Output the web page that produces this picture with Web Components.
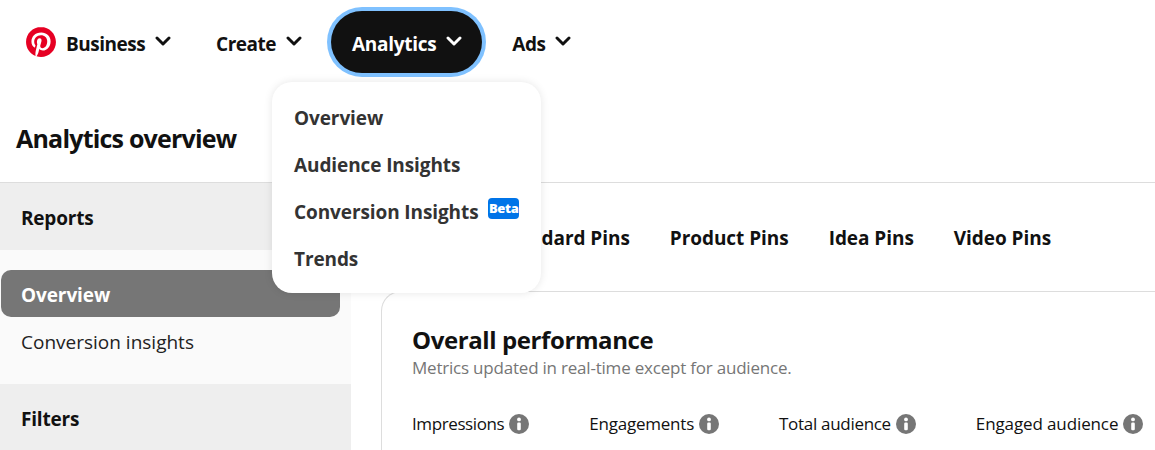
<!DOCTYPE html>
<html>
<head>
<meta charset="utf-8">
<title>Analytics overview</title>
<style>
  html, body { margin: 0; height: 450px; overflow: hidden; background: #fff; }
  body { font-family: "Open Sans", "Noto Sans", sans-serif; color: #111; }
</style>
</head>
<body>
<pin-page></pin-page>

<template id="nav-item-tpl">
  <style>
    :host { display: inline-flex; align-items: center; height: 62px; box-sizing: border-box; font-size: 19px; font-weight: 700; letter-spacing: -.5px; color: #111; gap: 10px; }
    :host([active]) { background: #111; color: #fff; border-radius: 31px; box-shadow: 0 0 0 4px #7fc1ff; padding: 0 20px 0 21px; letter-spacing: -.3px; }
    .label { padding-top: 3px; }
    svg { width: 16px; height: 16px; fill: none; stroke: currentColor; stroke-width: 4.4; stroke-linecap: round; stroke-linejoin: round; margin-top: -2px; }
  </style>
  <span class="label"><slot></slot></span>
  <svg viewBox="0 0 24 24"><path d="M3 7.5l9 9 9-9"/></svg>
</template>

<template id="top-nav-tpl">
  <style>
    :host { display: flex; align-items: center; height: 88px; box-sizing: border-box; padding: 0 0 4px 26px; }
    svg { width: 30px; height: 30px; fill: #e60023; margin-right: 10px; flex: none; }
    .items { display: flex; align-items: center; }
    ::slotted(nav-item:nth-child(1)) { margin-right: 45px; }
    ::slotted(nav-item:nth-child(2)) { margin-right: 29px; }
    ::slotted(nav-item:nth-child(3)) { margin-right: 30px; }
  </style>
  <svg viewBox="0 0 24 24"><path d="M12.017 0C5.396 0 .029 5.367.029 11.987c0 5.079 3.158 9.417 7.618 11.162-.105-.949-.199-2.403.041-3.439.219-.937 1.406-5.957 1.406-5.957s-.359-.72-.359-1.781c0-1.663.967-2.911 2.168-2.911 1.024 0 1.518.769 1.518 1.688 0 1.029-.653 2.567-.992 3.992-.285 1.193.6 2.165 1.775 2.165 2.128 0 3.768-2.245 3.768-5.487 0-2.861-2.063-4.869-5.008-4.869-3.41 0-5.409 2.562-5.409 5.199 0 1.033.394 2.143.889 2.741.099.12.112.225.085.345-.09.375-.293 1.199-.334 1.363-.053.225-.172.271-.401.165-1.495-.69-2.433-2.878-2.433-4.646 0-3.776 2.748-7.252 7.92-7.252 4.158 0 7.392 2.967 7.392 6.923 0 4.135-2.607 7.462-6.233 7.462-1.214 0-2.354-.629-2.758-1.379l-.749 2.848c-.269 1.045-1.004 2.352-1.498 3.146 1.123.345 2.306.535 3.55.535 6.607 0 11.985-5.365 11.985-11.987C23.97 5.39 18.592.026 11.985.026L12.017 0z"/></svg>
  <div class="items"><slot></slot></div>
</template>

<template id="drop-menu-tpl">
  <style>
    :host { display: flex; flex-direction: column; position: absolute; left: 272px; top: 82px; width: 269px; height: 211px; box-sizing: border-box; padding: 12px 22px 11px; background: #fff; border-radius: 20px; box-shadow: 0 0 8px rgba(0,0,0,.1); z-index: 5; }
  </style>
  <slot></slot>
</template>

<template id="menu-link-tpl">
  <style>
    :host { display: flex; flex: none; height: 47px; align-items: center; gap: 10px; font-size: 19px; font-weight: 700; letter-spacing: -.1px; color: #333; white-space: nowrap; }
    .badge { align-self: flex-start; margin-top: 10px; background: #0074e8; color: #fff; font-size: 13px; font-weight: 800; letter-spacing: -.3px; line-height: 20px; height: 21px; width: 32px; text-align: center; border-radius: 4px; }
    .badge:empty { display: none; }
  </style>
  <slot></slot><span class="badge"></span>
</template>

<template id="side-bar-tpl">
  <style>
    :host { display: block; background: #fafafa; height: 267px; overflow: hidden; }
    .head { display: flex; align-items: center; height: 67px; box-sizing: border-box; padding: 2px 0 0 21px; background: #eee; font-size: 19px; font-weight: 700; letter-spacing: -.2px; color: #111; }
    .list { display: flex; flex-direction: column; padding: 20px 11px 20px 1px; height: 134px; box-sizing: border-box; }
    .item { display: flex; align-items: center; height: 47px; padding: 2px 0 0 20px; box-sizing: border-box; border-radius: 10px; font-size: 19px; letter-spacing: 0; color: #222; }
    .item.on { background: #767676; color: #fff; font-weight: 700; letter-spacing: -.1px; }
  </style>
  <div class="head">Reports</div>
  <div class="list">
    <div class="item on">Overview</div>
    <div class="item">Conversion insights</div>
  </div>
  <div class="head">Filters</div>
</template>

<template id="metric-tpl">
  <style>
    :host { display: inline-flex; align-items: center; gap: 5px; font-size: 17px; letter-spacing: -.3px; color: #111; white-space: nowrap; }
    svg { width: 20px; height: 20px; flex: none; }
  </style>
  <slot></slot>
  <svg viewBox="0 0 20 20"><circle cx="10" cy="10" r="10" fill="#767676"/><circle cx="10" cy="5.4" r="1.9" fill="#fff"/><rect x="8.2" y="8.6" width="3.6" height="7.6" rx="1.2" fill="#fff"/></svg>
</template>

<template id="perf-card-tpl">
  <style>
    :host { display: block; height: 170px; margin-left: 30px; box-sizing: border-box; border: 1px solid #ddd; border-right: 0; border-bottom: 0; border-radius: 20px 0 0 0; padding: 30px 0 0 30px; }
    h2 { margin: 0; font-size: 24px; line-height: 36px; font-weight: 700; letter-spacing: -.4px; color: #111; }
    p { margin: 0; font-size: 17px; line-height: 20px; letter-spacing: -.21px; color: #767676; }
    .row { display: flex; gap: 60px; margin-top: 34px; }
  </style>
  <h2>Overall performance</h2>
  <p>Metrics updated in real-time except for audience.</p>
  <div class="row"><slot></slot></div>
</template>

<template id="pin-page-tpl">
  <style>
    :host { display: block; position: relative; width: 1155px; height: 450px; overflow: hidden; }
    .title { height: 95px; box-sizing: border-box; padding: 29px 0 0 16px; border-bottom: 1px solid #ddd; font-size: 25px; line-height: 42px; font-weight: 700; letter-spacing: -.8px; color: #111; }
    .body { display: grid; grid-template-columns: 351px 1fr; }
    .tabs { display: flex; gap: 40px; height: 108px; box-sizing: border-box; padding: 2px 0 0 148px; align-items: center; font-size: 19px; font-weight: 700; letter-spacing: -.05px; color: #111; white-space: nowrap; }
    pin-metric:nth-child(1) { letter-spacing: -.4px; }
    pin-metric:nth-child(2) { letter-spacing: -.22px; }
    pin-metric:nth-child(4) { letter-spacing: -.12px; }
  </style>
  <top-nav>
    <nav-item>Business</nav-item>
    <nav-item>Create</nav-item>
    <nav-item active>Analytics</nav-item>
    <nav-item>Ads</nav-item>
  </top-nav>
  <div class="title">Analytics overview</div>
  <div class="body">
    <side-bar></side-bar>
    <div>
      <div class="tabs"><span>Standard Pins</span><span>Product Pins</span><span>Idea Pins</span><span>Video Pins</span></div>
      <perf-card>
        <pin-metric>Impressions</pin-metric>
        <pin-metric>Engagements</pin-metric>
        <pin-metric>Total audience</pin-metric>
        <pin-metric>Engaged audience</pin-metric>
      </perf-card>
    </div>
  </div>
  <drop-menu>
    <menu-link>Overview</menu-link>
    <menu-link>Audience Insights</menu-link>
    <menu-link badge="Beta">Conversion Insights</menu-link>
    <menu-link>Trends</menu-link>
  </drop-menu>
</template>

<script>
  // every element just clones its template into an open shadow root
  function fromTemplate(tag, tplId, setup) {
    customElements.define(tag, class extends HTMLElement {
      constructor() {
        super();
        this.attachShadow({ mode: "open" });
        this.shadowRoot.appendChild(document.getElementById(tplId).content.cloneNode(true));
      }
      connectedCallback() {
        if (setup) setup(this);
      }
    });
  }

  fromTemplate("nav-item", "nav-item-tpl");
  fromTemplate("top-nav", "top-nav-tpl");
  fromTemplate("drop-menu", "drop-menu-tpl");
  fromTemplate("menu-link", "menu-link-tpl", (el) => {
    el.shadowRoot.querySelector(".badge").textContent = el.getAttribute("badge") || "";
  });
  fromTemplate("side-bar", "side-bar-tpl");
  fromTemplate("pin-metric", "metric-tpl");
  fromTemplate("perf-card", "perf-card-tpl");
  fromTemplate("pin-page", "pin-page-tpl");
</script>
</body>
</html>
